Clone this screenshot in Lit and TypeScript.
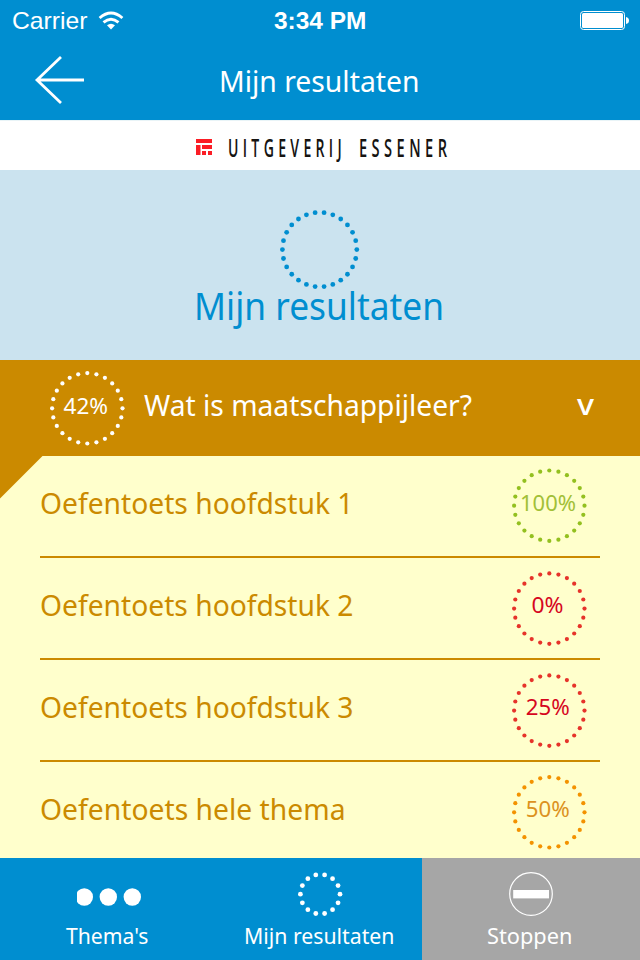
import { LitElement, html, svg, css } from "lit";
import { customElement, property } from "lit/decorators.js";

// Text set to an exact advance width, with its baseline at y = size.
// squeeze condenses the glyphs horizontally without changing the final width.
@customElement("fit-text")
class FitText extends LitElement {
  @property() text = "";
  @property({ type: Number }) width = 100;
  @property({ type: Number }) size = 30;
  @property({ type: Number }) squeeze = 1;
  static styles = css`
    :host { display: block; flex: none; }
    svg { display: block; overflow: visible; }
    text { fill: currentColor; white-space: pre; }
  `;
  render() {
    return html`<svg width=${this.width} height=${this.size + 10}>
      <text x="0" y=${this.size} font-size=${this.size} textLength=${this.width / this.squeeze}
        transform="scale(${this.squeeze} 1)" lengthAdjust="spacingAndGlyphs">${this.text}</text>
    </svg>`;
  }
}

@customElement("dot-ring")
class DotRing extends LitElement {
  @property({ type: Number }) dots = 24;
  @property({ type: Number }) radius = 35.2;
  @property({ type: Number }) dot = 2.1;
  @property({ type: Number }) shift = 0;
  @property() label = "";
  @property({ type: Number }) labelWidth = 44;
  @property({ type: Number }) labelX = 0;
  @property({ type: Number }) labelY = 5.2;
  static styles = css`
    :host { display: block; flex: none; }
    svg { display: block; overflow: visible; }
    circle { fill: var(--dot-color, currentColor); }
    text { fill: currentColor; font-size: 22.3px; }
  `;
  render() {
    const c = this.radius + this.dot;
    const points = Array.from({ length: this.dots }, (_, i) => (i * 2 * Math.PI) / this.dots);
    return html`<svg width=${c * 2} height=${c * 2}>
      ${points.map((a) => svg`<circle r=${this.dot} cx=${c + this.radius * Math.cos(a)}
        cy=${c + this.shift + this.radius * Math.sin(a)}></circle>`)}
      ${this.label
        ? svg`<text x=${c + this.labelX - this.labelWidth / 2} y=${c + this.labelY}
            textLength=${this.labelWidth} lengthAdjust="spacingAndGlyphs">${this.label}</text>`
        : ""}
    </svg>`;
  }
}

interface Result {
  title: string; width: number; score: string; scoreWidth: number;
  scoreX: number; tone: string; shift: number;
}

const results: Result[] = [
  { title: "Oefentoets hoofdstuk 1", width: 313.5, score: "100%", scoreWidth: 56, scoreX: -1.3, tone: "good", shift: -0.6 },
  { title: "Oefentoets hoofdstuk 2", width: 313.5, score: "0%", scoreWidth: 32, scoreX: -1.8, tone: "bad", shift: 0.3 },
  { title: "Oefentoets hoofdstuk 3", width: 313.5, score: "25%", scoreWidth: 44, scoreX: -1.5, tone: "bad", shift: 0.3 },
  { title: "Oefentoets hele thema", width: 305.5, score: "50%", scoreWidth: 44, scoreX: -1.5, tone: "fair", shift: 0 },
];

@customElement("app-root")
class AppRoot extends LitElement {
  static styles = css`
    :host {
      display: flex; flex-direction: column; width: 640px; height: 960px; overflow: hidden;
      font-family: "Noto Sans", "Open Sans", sans-serif; background: #ffffcc;
    }
    svg { display: block; flex: none; overflow: visible; }
    .status {
      height: 40px; background: #008ed0; color: #fff; display: grid;
      grid-template-columns: 1fr auto 1fr; font-family: "Liberation Sans", Arial, sans-serif;
    }
    .carrier { display: flex; gap: 10px; padding: 5px 0 0 12px; }
    .wifi { margin-top: 5.5px; }
    .time { padding-top: 5px; font-weight: bold; }
    .battery { justify-self: end; padding: 11px 11px 0 0; }
    .nav { height: 80px; background: #008ed0; color: #fff; display: flex; }
    .back { margin: 15px 0 0 34px; }
    .nav-title { margin: 21.9px 0 0 135px; }
    .brand {
      height: 50px; box-sizing: border-box; background: #fff; border-top: 1px solid #e9f4f7;
      display: flex; padding-left: 196px; color: #161412; font-weight: 600;
      font-family: "Open Sans", "Noto Sans", sans-serif; letter-spacing: 7.5px;
    }
    .mark { margin: 18px 15.5px 0 0; }
    .word { margin: 11px 13.5px 0 0; }
    .hero {
      height: 190px; background: #cbe3ef; color: #008ed0; display: flex;
      flex-direction: column; align-items: center; padding-top: 40.2px; box-sizing: border-box;
    }
    .hero-title { margin: -6.4px 2px 0 0; }
    .theme { height: 96px; background: #cb8a00; color: #fff; display: flex; }
    .theme-ring { margin: 10.5px 0 0 49.7px; }
    .theme-title { margin: 26.1px 0 0 19.5px; }
    .chevron { margin: 26.3px 0 0 105px; font-weight: 500; }
    .list { flex: 1; position: relative; color: #cb8a00; padding: 0 40px; }
    .fold {
      position: absolute; left: 0; top: 0; width: 42.5px; height: 42.5px;
      background: #cb8a00; clip-path: polygon(0 0, 100% 0, 0 100%);
    }
    .row {
      height: 102px; box-sizing: border-box; border-bottom: 2px solid #cb8a00;
      display: flex; justify-content: space-between;
    }
    .row:last-child { border-bottom: 0; height: 96px; }
    .row-title { margin: 27.9px 0 0 -0.5px; }
    .score { margin: 12.7px 13.9px 0 0; }
    .good { color: #a2c037; --dot-color: #93c01f; }
    .bad { color: #d6061e; --dot-color: #e6332a; }
    .fair { color: #dc921e; --dot-color: #f39200; }
    .tabs { height: 102px; display: grid; grid-template-columns: 214px 208px 218px; color: #fff; background: #008ed0; }
    .tab { display: flex; flex-direction: column; align-items: center; }
    .stop { background: #a6a6a6; }
    .icon { height: 64px; display: flex; align-items: flex-start; }
    .dots { margin: 30px 0 0 4px; overflow: hidden; }
    .tab-ring { margin: 13.5px 0 0 4px; }
    .stop-icon { margin-top: 13px; }
    .shift-right { margin-left: 3px; }
    .shift-left { margin-right: 3px; }
  `;
  render() {
    return html`
      <div class="status">
        <div class="carrier">
          <fit-text text="Carrier" width="75.5" size="24"></fit-text>
          <svg class="wifi" width="26" height="20" viewBox="0 0 26 20">
            <g fill="none" stroke="#fff" stroke-width="2.9">
              <path d="M1.6 7Q13 -3 24.4 7"></path>
              <path d="M5.5 11.3Q13 5 20.5 11.3"></path>
            </g>
            <path d="M9 14.3Q13 11.2 17 14.3L13 18.5Z" fill="#fff"></path>
          </svg>
        </div>
        <fit-text class="time" text="3:34 PM" width="92.5" size="24"></fit-text>
        <svg class="battery" width="49" height="19" viewBox="0 0 49 19">
          <rect x=".5" y=".5" width="44" height="18" rx="3" fill="none" stroke="#fff"></rect>
          <rect x="2" y="2" width="41" height="15" rx="1.5" fill="#fff"></rect>
          <path d="M46 6Q49 6.5 49 9.5T46 13Z" fill="#fff"></path>
        </svg>
      </div>
      <div class="nav">
        <svg class="back" width="50" height="50" viewBox="0 0 50 50">
          <path d="M27 2L3 25L27 48M2.5 25H50" fill="none" stroke="#fff" stroke-width="2.8"></path>
        </svg>
        <fit-text class="nav-title" text="Mijn resultaten" width="200.5" size="29.7"></fit-text>
      </div>
      <div class="brand">
        <svg class="mark" width="16" height="16" viewBox="0 0 16 16" fill="#fb1d25">
          <path d="M0 0H16V4H0ZM0 6H4.5V16H0ZM6 6H16V10H6ZM6 12H10V16H6ZM12 12H16V16H12Z"></path>
        </svg>
        <fit-text class="word" text="UITGEVERIJ" width="118" size="24.5" squeeze=".55"></fit-text>
        <fit-text class="word" text="ESSENER" width="92.5" size="24.5" squeeze=".55"></fit-text>
      </div>
      <div class="hero">
        <dot-ring dots="26" radius="37.2" dot="2.4"></dot-ring>
        <fit-text class="hero-title" text="Mijn resultaten" width="250" size="37.4"></fit-text>
      </div>
      <div class="theme">
        <dot-ring class="theme-ring" label="42%" .labelWidth=${44.5} .labelX=${-1.5}></dot-ring>
        <fit-text class="theme-title" text="Wat is maatschappijleer?" width="328" size="29.7"></fit-text>
        <fit-text class="chevron" text="v" width="17" size="28.5"></fit-text>
      </div>
      <div class="list">
        <div class="fold"></div>
        ${results.map((r) => html`<div class="row">
          <fit-text class="row-title" text=${r.title} width=${r.width} size="29.7"></fit-text>
          <dot-ring class="score ${r.tone}" label=${r.score} .labelWidth=${r.scoreWidth}
            .labelX=${r.scoreX} .labelY=${5} .shift=${r.shift}></dot-ring>
        </div>`)}
      </div>
      <div class="tabs">
        <div class="tab">
          <div class="icon"><svg class="dots" width="64" height="18" viewBox="0 0 64 18" fill="#fff">
            <circle cx="7.3" cy="9" r="8.7"></circle><circle cx="31.3" cy="9" r="8.7"></circle><circle cx="55.3" cy="9" r="8.7"></circle>
          </svg></div>
          <fit-text text="Thema's" width="82.5" size="22"></fit-text>
        </div>
        <div class="tab">
          <div class="icon"><dot-ring class="tab-ring" dots="14" radius="19.8" dot="2.4"></dot-ring></div>
          <fit-text class="shift-right" text="Mijn resultaten" width="150.5" size="22"></fit-text>
        </div>
        <div class="tab stop">
          <div class="icon"><svg class="stop-icon" width="46" height="46" viewBox="0 0 46 46">
            <circle cx="23" cy="23" r="21.3" fill="none" stroke="#fff" stroke-width="1.2"></circle>
            <rect x="5.2" y="19" width="35.8" height="8.4" fill="#fff"></rect>
          </svg></div>
          <fit-text class="shift-left" text="Stoppen" width="85.5" size="22"></fit-text>
        </div>
      </div>
    `;
  }
}
